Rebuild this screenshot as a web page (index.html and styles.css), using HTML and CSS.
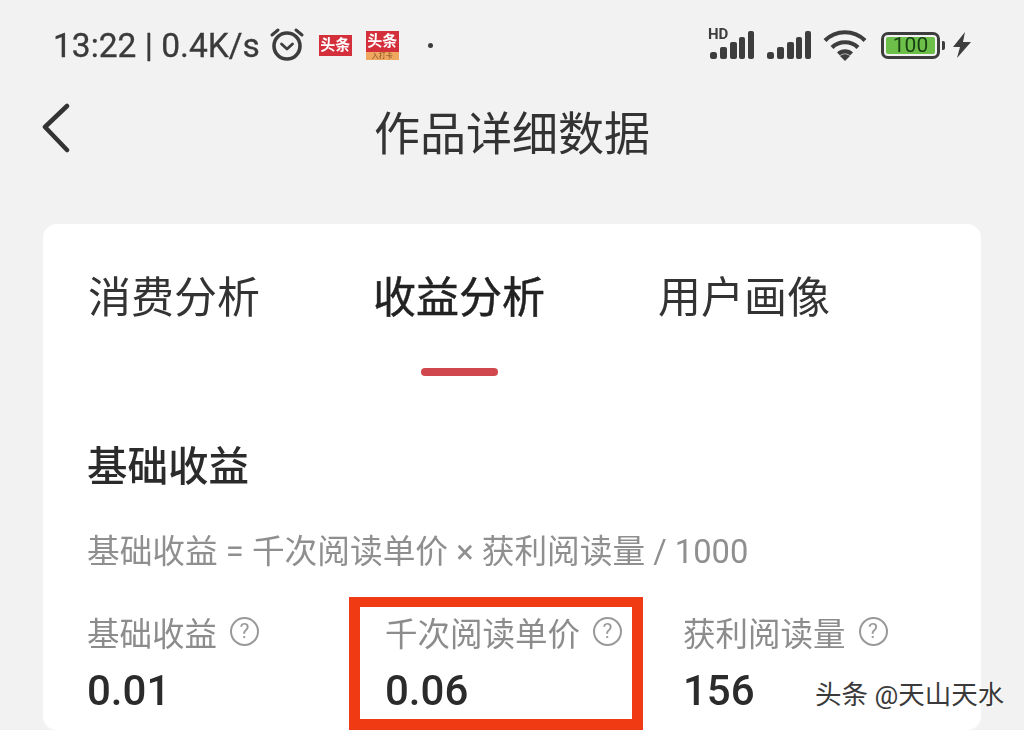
FILE: index.html
```html
<!DOCTYPE html>
<html lang="zh-CN">
<head>
    <meta charset="UTF-8">
    <meta name="viewport" content="width=device-width, initial-scale=1.0">
    <title>作品详细数据</title>
    <link rel="stylesheet" href="styles.css">
</head>
<body>
<div class="screen">
    <div class="statusbar">
        <div class="status-left">
            <span class="time">13:22 | 0.4K/s</span>
            <svg class="alarm" width="36" height="36" viewBox="0 0 36 36" fill="none" stroke="#3d3d3d" stroke-linecap="round" stroke-linejoin="round">
                <circle cx="18" cy="20" r="13" stroke-width="3.6"/>
                <path d="M12.5 18l5.5 5 5.500-5" stroke-width="2.8"/>
                <path d="M3 9l6-5M33 9l-6-5" stroke-width="3"/>
            </svg>
            <span class="badge">头条</span>
            <span class="badge badge-tall">头条<i class="badge-foot">入打卡</i></span>
            <span class="dot"></span>
        </div>
        <div class="status-right">
            <span class="signal-hd">
                <b>HD</b>
                <svg width="46" height="30" viewBox="0 0 46 30" fill="#3d3d3d">
                    <rect x="2" y="22" width="7" height="7" rx="2.5"/>
                    <rect x="12" y="17" width="7" height="12" rx="2"/>
                    <rect x="22" y="12" width="7" height="17" rx="2"/>
                    <rect x="31" y="7" width="6" height="22" rx="2"/>
                    <rect x="40" y="1" width="6" height="28" rx="2"/>
                </svg>
            </span>
            <svg class="signal" width="46" height="30" viewBox="0 0 46 30" fill="#3d3d3d">
                <rect x="1" y="22" width="7" height="7" rx="2.5"/>
                <rect x="11" y="17" width="7" height="12" rx="2"/>
                <rect x="21" y="12" width="7" height="17" rx="2"/>
                <rect x="30" y="7" width="6" height="22" rx="2"/>
                <rect x="39" y="1" width="6" height="28" rx="2"/>
            </svg>
            <svg width="44" height="34" viewBox="0 0 44 34" fill="none" stroke="#3d3d3d" stroke-width="4.2">
                <path d="M2 12.5C13 1.5 31 1.5 42 12.5"/>
                <path d="M9 19.5C16 12.5 28 12.5 35 19.5"/>
                <path d="M15.5 26C19 22.5 25 22.5 28.5 26"/>
                <path d="M22 33l-5-5c3-2.500 7-2.500 10 0z" fill="#3d3d3d" stroke="none"/>
            </svg>
            <span class="battery">
                <span class="battery-body"><span class="battery-fill">100</span></span>
                <span class="battery-tip"></span>
            </span>
            <svg class="bolt" width="20" height="28" viewBox="0 0 20 28" fill="#3d3d3d">
                <path d="M13 1L1 16h7l-3 11L19 11h-8z"/>
            </svg>
        </div>
    </div>

    <div class="navbar">
        <svg width="30" height="50" viewBox="0 0 30 50" fill="none" stroke="#333" stroke-width="4.5" stroke-linecap="round" stroke-linejoin="round">
            <path d="M26 3L4 24l22 23"/>
        </svg>
        <h1>作品详细数据</h1>
    </div>

    <div class="card">
        <div class="tabs">
            <div class="tab">消费分析</div>
            <div class="tab tab-active">收益分析<span class="tab-line"></span></div>
            <div class="tab">用户画像</div>
        </div>

        <h2>基础收益</h2>
        <p class="formula">基础收益 = 千次阅读单价 × 获利阅读量 / 1000</p>

        <div class="metrics">
            <div class="metric metric-first">
                <div class="metric-label">基础收益<span class="help">?</span></div>
                <div class="metric-value">0.01</div>
            </div>
            <div class="metric metric-marked">
                <div class="metric-label">千次阅读单价<span class="help">?</span></div>
                <div class="metric-value">0.06</div>
            </div>
            <div class="metric metric-last">
                <div class="metric-label">获利阅读量<span class="help">?</span></div>
                <div class="metric-value">156</div>
            </div>
        </div>
    </div>
</div>
<div class="watermark">头条 @天山天水</div>
</body>
</html>
```

FILE: styles.css
```css
html, body {
    margin: 0;
    height: 730px;
    overflow: hidden;
    background-color: #f2f2f2;
}
body {
    font-family: Roboto, "Noto Sans CJK SC", sans-serif;
    color: #303030;
    position: relative;
}
.screen {
    height: 730px;
    overflow: hidden;
    filter: blur(0.4px);
}

/* status bar */
.statusbar {
    height: 90px;
    display: flex;
    justify-content: space-between;
    align-items: center;
    padding: 0 52px 0 53px;
}
.status-left, .status-right {
    display: flex;
    align-items: center;
}
.time {
    font-size: 33.5px;
    color: #3a3a3a;
    white-space: nowrap;
    -webkit-text-stroke: 0.3px #3a3a3a;
}
.alarm {
    margin-left: 9px;
    margin-top: -3px;
}
.badge {
    width: 33px;
    height: 21px;
    margin-left: 14px;
    background-color: #d4303c;
    color: #fff;
    font-size: 15px;
    font-weight: 700;
    line-height: 21px;
    text-align: center;
    white-space: nowrap;
    overflow: hidden;
}
.badge-tall {
    height: 29px;
    margin-left: 14px;
    position: relative;
}
.badge-foot {
    position: absolute;
    left: 0;
    right: 0;
    bottom: 0;
    height: 8px;
    background-color: #f0a860;
    color: #7a4a20;
    font-size: 7px;
    font-style: normal;
    font-weight: 400;
    line-height: 8px;
}
.dot {
    width: 5px;
    height: 5px;
    margin-left: 29px;
    border-radius: 50%;
    background-color: #3d3d3d;
}
.status-right svg {
    display: block;
}
.signal-hd {
    position: relative;
    display: block;
    margin-right: 12px;
}
.signal-hd b {
    position: absolute;
    left: 0;
    top: -4px;
    font-size: 15px;
    line-height: 16px;
    color: #3d3d3d;
}
.signal {
    margin-right: 11px;
}
.battery {
    display: flex;
    align-items: center;
    margin-left: 14px;
}
.battery-body {
    width: 59px;
    height: 27px;
    box-sizing: border-box;
    border: 3px solid #3d3d3d;
    border-radius: 7px;
    padding: 2px;
}
.battery-fill {
    display: block;
    height: 100%;
    background-color: #6cc04a;
    border-radius: 2px;
    color: #173f12;
    font-size: 21px;
    line-height: 17px;
    text-align: center;
}
.battery-tip {
    width: 3px;
    height: 9px;
    margin-left: 2px;
    background-color: #3d3d3d;
    border-radius: 0 2px 2px 0;
}
.bolt {
    margin-left: 7px;
}

/* nav */
.navbar {
    height: 84px;
    display: grid;
    grid-template-columns: 1fr auto 1fr;
    align-items: center;
    padding-left: 41px;
    padding-right: 41px;
}
.navbar svg {
    margin-top: -8px;
}
.navbar h1 {
    margin: 3px 0 0;
    font-size: 46px;
    font-weight: 400;
    line-height: 60px;
    color: #333;
}

/* card */
.card {
    margin: 50px 43px 0;
    height: 506px;
    padding-left: 43px;
    background-color: #fff;
    border-radius: 14px;
}
.tabs {
    display: flex;
    gap: 113px;
    margin-left: 2px;
}
.tab {
    display: flex;
    flex-direction: column;
    align-items: center;
    height: 152px;
    box-sizing: border-box;
    padding-top: 46px;
    font-size: 43px;
    line-height: 56px;
    color: #333;
}
.tab-active {
    color: #222;
    -webkit-text-stroke: 0.5px #222;
}
.tab-line {
    width: 77px;
    height: 8px;
    margin-top: 42px;
    background-color: #d0484e;
    border-radius: 4px;
}
h2 {
    margin: 66px 0 0 1px;
    font-size: 40.5px;
    font-weight: 500;
    line-height: 50px;
    color: #2b2b2b;
}
.formula {
    margin: 40px 0 0 1px;
    font-size: 32.7px;
    line-height: 40px;
    color: #8f8f8f;
    white-space: nowrap;
}

/* metrics */
.metrics {
    display: flex;
    margin-top: 25px;
    margin-left: 1px;
}
.metric {
    box-sizing: border-box;
    height: 133px;
    white-space: nowrap;
}
.metric-first {
    width: 262px;
    padding-top: 18px;
}
.metric-marked {
    width: 294px;
    border: solid #f03a14;
    border-width: 10px 11px 11px;
    padding: 8px 0 0 25px;
}
.metric-last {
    padding: 18px 0 0 40px;
}
.metric-label {
    display: flex;
    align-items: center;
    font-size: 32.5px;
    line-height: 40px;
    color: #8c8c8c;
}
.help {
    width: 29px;
    height: 29px;
    box-sizing: border-box;
    margin-left: 13px;
    margin-top: -7px;
    border: 2px solid #999;
    border-radius: 50%;
    font-size: 21px;
    line-height: 25px;
    text-align: center;
    color: #999;
}
.metric-value {
    margin-top: 8px;
    font-size: 42px;
    font-weight: 500;
    line-height: 56px;
    color: #2b2b2b;
}

/* watermark lies over the screenshot */
.watermark {
    position: absolute;
    left: 815px;
    top: 679px;
    font-size: 26.5px;
    line-height: 32px;
    color: #3a3a3a;
    white-space: nowrap;
    text-shadow: 1px 1px 0 #fff, -1px -1px 0 #fff;
}
```
